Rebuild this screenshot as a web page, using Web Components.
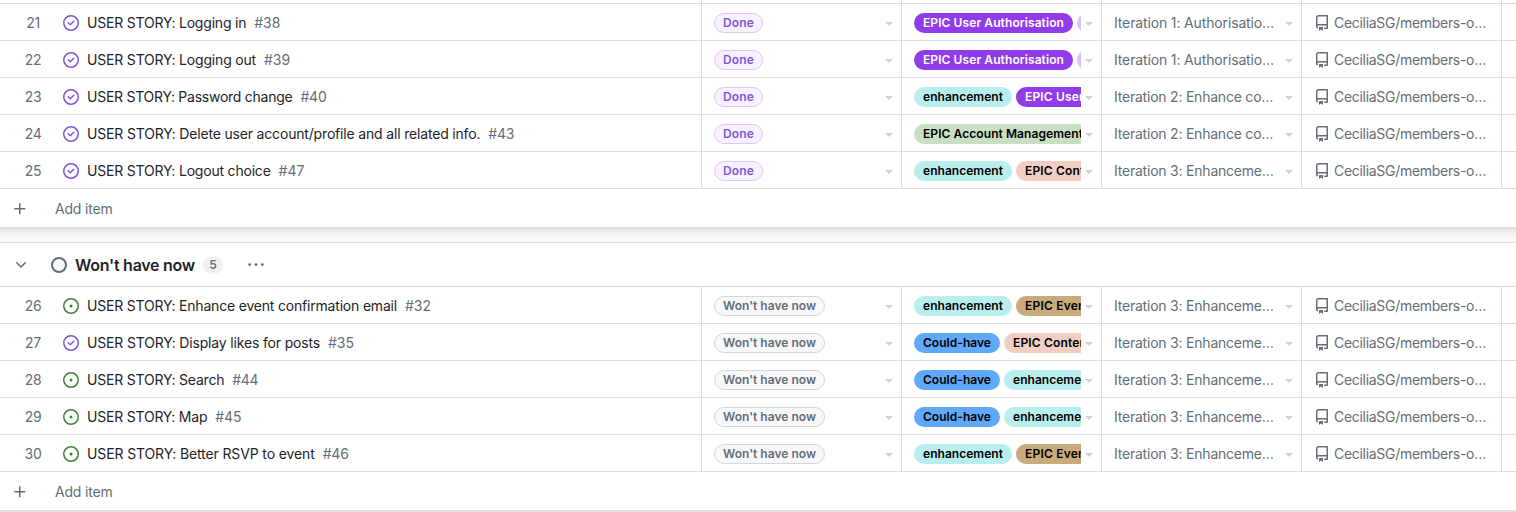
<!DOCTYPE html>
<html lang="en">
<head>
<meta charset="utf-8">
<title>Project board</title>
<style>
html,body{margin:0;height:100%;overflow:hidden;background:#fff}
body{font:14px/20px Inter,"Liberation Sans",sans-serif;color:#1f2328}
</style>
</head>
<body>
<project-table></project-table>
<script>
const define = (name, css, html, after) => {
  customElements.define(name, class extends HTMLElement {
    constructor() {
      super();
      this.attachShadow({mode: 'open'});
    }
    connectedCallback() {
      const body = typeof html === 'function' ? html(this) : html;
      this.shadowRoot.innerHTML = `<style>*{box-sizing:border-box}${css}</style>${body}`;
      if (after) after(this);
    }
  });
};

// Text run tracked so that it takes up the width given in its w attribute.
define('fit-text', ':host{display:inline-block;white-space:pre;flex:none}span{display:inline-block}',
  '<span><slot></slot></span>', el => {
    const target = parseFloat(el.getAttribute('w'));
    const span = el.shadowRoot.querySelector('span');
    const natural = span.getBoundingClientRect().width;
    if (target) {
      span.style.letterSpacing = (target - natural) / el.textContent.length + 'px';
      el.style.width = target + 'px';
    }
  });

const icons = {
  closed: ['#7f55dc', '<path d="M11.28 6.78a.75.75 0 0 0-1.06-1.06L7.25 8.69 5.78 7.22a.75.75 0 0 0-1.06 1.06l2 2a.75.75 0 0 0 1.06 0l3.5-3.5Z"/><path d="M16 8A8 8 0 1 1 0 8a8 8 0 0 1 16 0Zm-1.5 0a6.5 6.5 0 1 0-13 0 6.5 6.5 0 0 0 13 0Z"/>'],
  open: ['#3f8236', '<path d="M8 9.5a1.5 1.5 0 1 0 0-3 1.5 1.5 0 0 0 0 3Z"/><path d="M8 0a8 8 0 1 1 0 16A8 8 0 0 1 8 0ZM1.5 8a6.5 6.5 0 1 0 13 0 6.5 6.5 0 0 0-13 0Z"/>'],
  repo: ['#656d76', '<path d="M2 2.5A2.5 2.5 0 0 1 4.5 0h8.75a.75.75 0 0 1 .75.75v12.5a.75.75 0 0 1-.75.75h-2.5a.75.75 0 0 1 0-1.5h1.75v-2h-8a1 1 0 0 0-.714 1.7.75.75 0 1 1-1.072 1.05A2.495 2.495 0 0 1 2 11.5Zm10.5-1h-8a1 1 0 0 0-1 1v6.708A2.486 2.486 0 0 1 4.5 9h8ZM5 12.25a.25.25 0 0 1 .25-.25h3.5a.25.25 0 0 1 .25.25v3.25a.25.25 0 0 1-.4.2l-1.45-1.087a.249.249 0 0 0-.3 0L5.4 15.7a.25.25 0 0 1-.4-.2Z"/>'],
  plus: ['#656d76', '<path d="M7.75 2a.75.75 0 0 1 .75.75V7h4.25a.75.75 0 0 1 0 1.5H8.5v4.25a.75.75 0 0 1-1.5 0V8.5H2.75a.75.75 0 0 1 0-1.5H7V2.75A.75.75 0 0 1 7.75 2Z"/>'],
  chevron: ['#656d76', '<path d="M12.78 5.22a.749.749 0 0 1 0 1.06l-4.25 4.25a.749.749 0 0 1-1.06 0L3.22 6.28a.749.749 0 1 1 1.06-1.06L8 8.939l3.72-3.719a.749.749 0 0 1 1.06 0Z"/>'],
  dots: ['#656d76', '<circle cx="1.7" cy="7.6" r="1.4"/><circle cx="8" cy="7.6" r="1.4"/><circle cx="14.3" cy="7.6" r="1.4"/>'],
  ring: ['#656d76', '<circle cx="8" cy="8" r="7" fill="#f6f8fa" stroke="#656d76" stroke-width="2"/>'],
  caret: ['#cdd0d4', '<path d="m4.427 7.427 3.396 3.396a.25.25 0 0 0 .354 0l3.396-3.396A.25.25 0 0 0 11.396 7H4.604a.25.25 0 0 0-.177.427Z"/>']
};
define('gh-icon', ':host{display:block;width:16px;height:16px;flex:none}svg{display:block}', el => {
  const [color, shape] = icons[el.getAttribute('name')];
  return `<svg width="16" height="16" viewBox="0 0 16 16" fill="${color}">${shape}</svg>`;
});

define('label-pill', `
  :host{display:flex;flex:none;height:20px;padding:0 8px;border:1px solid var(--edge,transparent);border-radius:10px;
    background:var(--fill);color:var(--ink,#000);font-size:12px;font-weight:600;line-height:18px;box-sizing:border-box}`,
  '<slot></slot>');

define('table-cell', `
  :host{display:flex;align-items:center;width:200px;height:36px;flex:none;padding:2px 4px 0 12px;border-left:1px solid #d8dee4;box-sizing:border-box;color:#656d76}
  div{display:flex;align-items:center;gap:4px;width:167px;overflow:hidden;height:22px;flex:none}
  :host([wide]) div{width:175px}`,
  el => '<div><slot></slot></div>' + (el.hasAttribute('wide') ? '' : '<gh-icon name="caret"></gh-icon>'));

const labels = {
  auth: ['EPIC User Authorisation', 141, '#913ceb', '#fff'],
  user: ['EPIC User', 59, '#913ceb', '#fff'],
  account: ['EPIC Account Management', 160, '#c8dfc4'],
  content: ['EPIC Content', 78.5, '#f0cec4'],
  event: ['EPIC Event', 65, '#c8aa7b'],
  enh: ['enhancement', 80, '#b8eeed'],
  could: ['Could-have', 68, '#5fa8fa'],
  must: ['', 30, '#d4c5f9']
};
const statuses = {
  done: ['Done', 31, '#f8f0ff', '#7f55d9', '#dcc9f9'],
  wont: ["Won't have now", 93, '#f6f8fa', '#656d76', '#d0d7de']
};
const iterations = {
  1: ['Iteration 1: Authorisatio…', 160],
  2: ['Iteration 2: Enhance co…', 159.2],
  3: ['Iteration 3: Enhanceme…', 159.7]
};
const pill = ([text, w, fill, ink = '#000', edge = 'transparent']) =>
  `<label-pill style="--fill:${fill};--ink:${ink};--edge:${edge}">${text ? `<fit-text w="${w}">${text}</fit-text>` : `<span style="width:${w}px"></span>`}</label-pill>`;

define('table-row', `
  :host{display:flex;height:37px;border-bottom:1px solid #d8dee4;box-sizing:border-box;width:1516px}
  .title{display:flex;align-items:center;width:701px;height:36px;padding-top:2px}
  .num{width:26px;text-align:center;color:#656d76;margin:0 17px 0 20px;letter-spacing:-.35px}
  .title fit-text{margin-left:8px}
  .id{color:#656d76}
  .edge{width:15px;border-left:1px solid #d8dee4}`,
  el => {
    const d = n => el.getAttribute(n);
    const it = iterations[d('iteration')];
    return `<div class="title"><span class="num">${d('num')}</span><gh-icon name="${d('icon')}"></gh-icon>
      <fit-text w="${d('w')}">USER STORY: ${d('name')}</fit-text><fit-text class="id" w="26">#${d('issue')}</fit-text></div>
      <table-cell>${pill(statuses[d('status')])}</table-cell>
      <table-cell>${d('labels').split(' ').map(k => pill(labels[k])).join('')}</table-cell>
      <table-cell><fit-text w="${it[1]}">${it[0]}</fit-text></table-cell>
      <table-cell wide><gh-icon name="repo"></gh-icon><fit-text w="152">CeciliaSG/members-o…</fit-text></table-cell>
      <div class="edge"></div>`;
  });

define('add-row', `
  :host{display:flex;align-items:center;height:38px;padding:1px 12px 0;color:#656d76;box-sizing:border-box}
  gh-icon{margin-right:27px}`,
  '<gh-icon name="plus"></gh-icon><fit-text w="57.5">Add item</fit-text>');

define('group-header', `
  :host{display:flex;align-items:center;height:45px;padding-left:13px;border-top:1px solid #d8dee4;border-bottom:1px solid #d0d7de;box-sizing:border-box}
  .ring{margin-left:22px}
  .name{font-size:16px;font-weight:600;margin-left:8px}
  .count{width:20px;height:18px;border-radius:9px;background:#eff1f3;color:#656d76;font-size:12px;font-weight:600;line-height:18px;text-align:center;margin-left:8px}
  .more{margin-left:25px}`,
  `<gh-icon name="chevron"></gh-icon><gh-icon class="ring" name="ring"></gh-icon>
   <fit-text class="name" w="120">Won't have now</fit-text><span class="count">5</span><gh-icon class="more" name="dots"></gh-icon>`);

const row = (num, icon, name, w, issue, status, tags, iteration) =>
  `<table-row num="${num}" icon="${icon}" name="${name}" w="${w}" issue="${issue}" status="${status}" labels="${tags}" iteration="${iteration}"></table-row>`;

define('project-table', `
  :host{display:block;width:1516px;height:512px;overflow:hidden;background:#fff}
  .tail{display:flex;height:4px;border-bottom:1px solid #d8dee4;box-sizing:border-box;padding-left:701px}
  .tail i{flex:none;width:200px;border-left:1px solid #d8dee4}
  .tail i:last-child{width:15px}
  .gap{height:15px;background:linear-gradient(#dadde0,#e6e9eb 3px,#f0f2f4 7px,#f6f8fa 12px)}
  .end{height:2px;background:linear-gradient(#d8dee4,#e2e5e8)}`,
  `<div class="tail"><i></i><i></i><i></i><i></i><i></i></div>` +
  row(21, 'closed', 'Logging in', 159.3, 38, 'done', 'auth must', 1) +
  row(22, 'closed', 'Logging out', 169, 39, 'done', 'auth must', 1) +
  row(23, 'closed', 'Password change', 205.5, 40, 'done', 'enh user', 2) +
  row(24, 'closed', 'Delete user account/profile and all related info.', 393.3, 43, 'done', 'account', 2) +
  row(25, 'closed', 'Logout choice', 183.6, 47, 'done', 'enh content', 3) +
  `<add-row></add-row><div class="gap"></div><group-header></group-header>` +
  row(26, 'open', 'Enhance event confirmation email', 310, 32, 'wont', 'enh event', 3) +
  row(27, 'closed', 'Display likes for posts', 233, 35, 'wont', 'could content', 3) +
  row(28, 'open', 'Search', 137.3, 44, 'wont', 'could enh', 3) +
  row(29, 'open', 'Map', 120.3, 45, 'wont', 'could enh', 3) +
  row(30, 'open', 'Better RSVP to event', 227.7, 46, 'wont', 'enh event', 3) +
  `<add-row></add-row><div class="end"></div>`);
</script>
</body>
</html>
